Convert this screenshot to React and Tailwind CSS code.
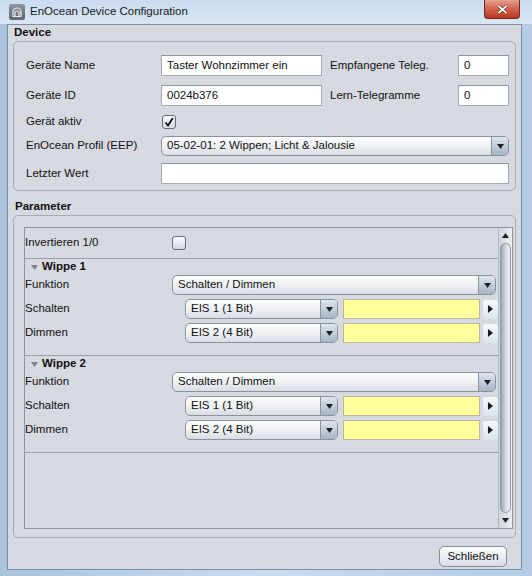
import React from 'react'

const font = { fontFamily: '"Liberation Sans", Arial, sans-serif' }

const Down = () => (
  <svg width="7" height="5" viewBox="0 0 7 5">
    <path d="M0 0h7L3.5 5z" fill="#1f1f1f" />
  </svg>
)

const Combo = ({ text, className = '' }) => (
  <div className={`flex h-[20px] rounded-[5px] border border-[#8a929e] bg-linear-to-b from-[#fdfdfe] via-[#eef0f3] to-[#d9dde3] overflow-hidden ${className}`}>
    <div className="flex-1 flex items-center pl-[5px] text-[11.5px] text-[#111] whitespace-nowrap overflow-hidden">{text}</div>
    <div className="w-[17px] border-l border-[#8a929e] bg-linear-to-b from-[#dfe6ee] to-[#a6b4c4] flex items-center justify-center">
      <Down />
    </div>
  </div>
)

const Field = ({ text = '', className = '' }) => (
  <div className={`h-[21px] border border-[#a3aab4] border-t-[#8d949e] bg-white flex items-center pl-[5px] text-[11.5px] text-[#111] ${className}`}>
    {text}
  </div>
)

const Check = ({ checked }) => (
  <div className="w-[14px] h-[14px] rounded-[3px] border border-[#5f6f82] bg-linear-to-b from-[#fbfcfd] to-[#d3dae3] flex items-center justify-center">
    {checked && (
      <svg width="10" height="10" viewBox="0 0 10 10">
        <path d="M1.5 5.5L4 8.5L8.8 1" stroke="#111" strokeWidth="1.8" fill="none" />
      </svg>
    )}
  </div>
)

const ArrowBtn = () => (
  <div className="w-[15px] h-[19px] ml-[3px] rounded-[3px] bg-linear-to-b from-[#f6f8fb] to-[#dbe3ec] flex items-center justify-center">
    <svg width="5" height="8" viewBox="0 0 5 8">
      <path d="M0 0L5 4L0 8z" fill="#1a1a1a" />
    </svg>
  </div>
)

const SubRow = ({ label, text }) => (
  <div className="flex items-center h-[20px]">
    <div className="w-[160px] text-[11.5px] text-[#111]">{label}</div>
    <Combo text={text} className="w-[153px]" />
    <div className="w-[137px] h-[20px] ml-[5px] bg-[#ffff9c] border border-[#bdb9a0]" />
    <ArrowBtn />
  </div>
)

const Wippe = ({ name }) => (
  <div className="border-t border-[#9aa1aa]">
    <div className="h-[16px] flex items-center pl-[6px] gap-[4px]">
      <svg width="7" height="5" viewBox="0 0 7 5">
        <path d="M0 0h7L3.5 5z" fill="#7d848e" />
      </svg>
      <span className="text-[11.5px] font-bold text-[#111]">{name}</span>
    </div>
    <div className="flex flex-col gap-[4px] pb-[12px]">
      <div className="flex items-center h-[20px]">
        <div className="w-[147px] text-[11.5px] text-[#111]">Funktion</div>
        <Combo text="Schalten / Dimmen" className="w-[324px]" />
      </div>
      <SubRow label="Schalten" text="EIS 1 (1 Bit)" />
      <SubRow label="Dimmen" text="EIS 2 (4 Bit)" />
    </div>
  </div>
)

export default function App() {
  return (
    <div
      className="w-[532px] h-[576px] flex flex-col bg-linear-to-r from-[#a9c3de] via-[#cbdcee] to-[#b4cbe3] overflow-hidden"
      style={font}
    >
      {/* title bar */}
      <div className="h-[24px] flex items-center pl-[9px] pr-[12px] bg-linear-to-b from-[#c9dbee] to-[#d9e6f3]">
        <div className="w-[16px] h-[16px] rounded-[2px] bg-linear-to-b from-[#8f959c] to-[#5d646c] flex items-center justify-center">
          <svg width="12" height="12" viewBox="0 0 12 12">
            <path d="M2 10V6a4 4 0 0 1 8 0v4" stroke="#e9ecef" strokeWidth="1.2" fill="none" />
            <path d="M4 10V7a2 2 0 0 1 4 0v3" stroke="#e9ecef" strokeWidth="1.2" fill="none" />
            <path d="M1.5 10.5h9" stroke="#e9ecef" strokeWidth="1" />
          </svg>
        </div>
        <span className="ml-[5px] text-[11.5px] text-[#1b1b1b]">EnOcean Device Configuration</span>
        <div className="ml-auto self-start w-[36px] h-[19px] rounded-b-[4px] border border-t-0 border-[#6e2a20] bg-linear-to-b from-[#e7a08f] via-[#d0614a] to-[#b9351f] flex items-center justify-center">
          <svg width="11" height="9" viewBox="0 0 11 9">
            <path d="M1.5 1L9.5 8M9.5 1L1.5 8" stroke="#5a1d14" strokeWidth="3" />
            <path d="M1.5 1L9.5 8M9.5 1L1.5 8" stroke="#ffffff" strokeWidth="1.8" />
          </svg>
        </div>
      </div>

      {/* frame + content */}
      <div className="flex-1 flex pl-[7px] pr-[10px] pb-[6px]">
        <div className="flex-1 flex flex-col bg-[#d6d9df] border border-[#7d8ea2]">
          <div className="h-[16px] pl-[6px] flex items-center text-[11.5px] font-bold text-[#111]">Device</div>

          {/* Device box */}
          <div className="ml-[5px] mr-[5px] h-[150px] rounded-[5px] border border-[#a6acb5] pt-[13px] pl-[12px] pr-[5px]">
            <div className="flex items-center h-[21px]">
              <div className="w-[135px] text-[11.5px] text-[#111]">Geräte Name</div>
              <Field text="Taster Wohnzimmer ein" className="w-[161px]" />
              <div className="w-[128px] ml-[8px] text-[11.5px] text-[#111]">Empfangene Teleg.</div>
              <Field text="0" className="w-[51px]" />
            </div>
            <div className="flex items-center h-[21px] mt-[9px]">
              <div className="w-[135px] text-[11.5px] text-[#111]">Geräte ID</div>
              <Field text="0024b376" className="w-[161px]" />
              <div className="w-[128px] ml-[8px] text-[11.5px] text-[#111]">Lern-Telegramme</div>
              <Field text="0" className="w-[51px]" />
            </div>
            <div className="flex items-center h-[15px] mt-[8px]">
              <div className="w-[136px] text-[11.5px] text-[#111]">Gerät aktiv</div>
              <Check checked />
            </div>
            <div className="flex items-center h-[20px] mt-[7px]">
              <div className="w-[135px] text-[11.5px] text-[#111]">EnOcean Profil (EEP)</div>
              <Combo text="05-02-01: 2 Wippen; Licht & Jalousie" className="w-[348px]" />
            </div>
            <div className="flex items-center h-[21px] mt-[7px]">
              <div className="w-[135px] text-[11.5px] text-[#111]">Letzter Wert</div>
              <Field className="w-[348px]" />
            </div>
          </div>

          <div className="h-[16px] mt-[8px] pl-[7px] flex items-center text-[11.5px] font-bold text-[#111]">Parameter</div>

          {/* Parameter box */}
          <div className="ml-[5px] mr-[5px] h-[323px] rounded-[5px] border border-[#a6acb5] pt-[11px] pb-[8px] pl-[10px] pr-[2px] flex">
            <div className="flex-1 flex border border-[#8c95a0]">
              <div className="flex-1 flex flex-col">
                <div className="h-[30px] flex items-center">
                  <div className="w-[147px] text-[11.5px] text-[#111]">Invertieren 1/0</div>
                  <Check />
                </div>
                <Wippe name="Wippe 1" />
                <Wippe name="Wippe 2" />
                <div className="border-t border-[#9aa1aa]" />
              </div>

              {/* scrollbar */}
              <div className="w-[14px] flex flex-col bg-linear-to-r from-[#cfd4db] to-[#eceef1] border-l border-[#b3b9c1]">
                <div className="h-[15px] flex items-center justify-center">
                  <svg width="7" height="5" viewBox="0 0 7 5">
                    <path d="M0 5h7L3.5 0z" fill="#1f1f1f" />
                  </svg>
                </div>
                <div className="flex-1 mx-[1px] rounded-[6px] border border-[#8f98a3] bg-linear-to-r from-[#9aa3ae] via-[#d3d8de] to-[#eef0f3]" />
                <div className="h-[15px] flex items-center justify-center">
                  <Down />
                </div>
              </div>
            </div>
          </div>

          {/* footer */}
          <div className="flex justify-end mt-[8px] pr-[14px]">
            <div className="w-[68px] h-[21px] rounded-[5px] border border-[#868e99] bg-linear-to-b from-[#fcfcfd] to-[#d9dde3] flex items-center justify-center text-[11.5px] text-[#111]">
              Schließen
            </div>
          </div>
        </div>
      </div>
    </div>
  )
}
